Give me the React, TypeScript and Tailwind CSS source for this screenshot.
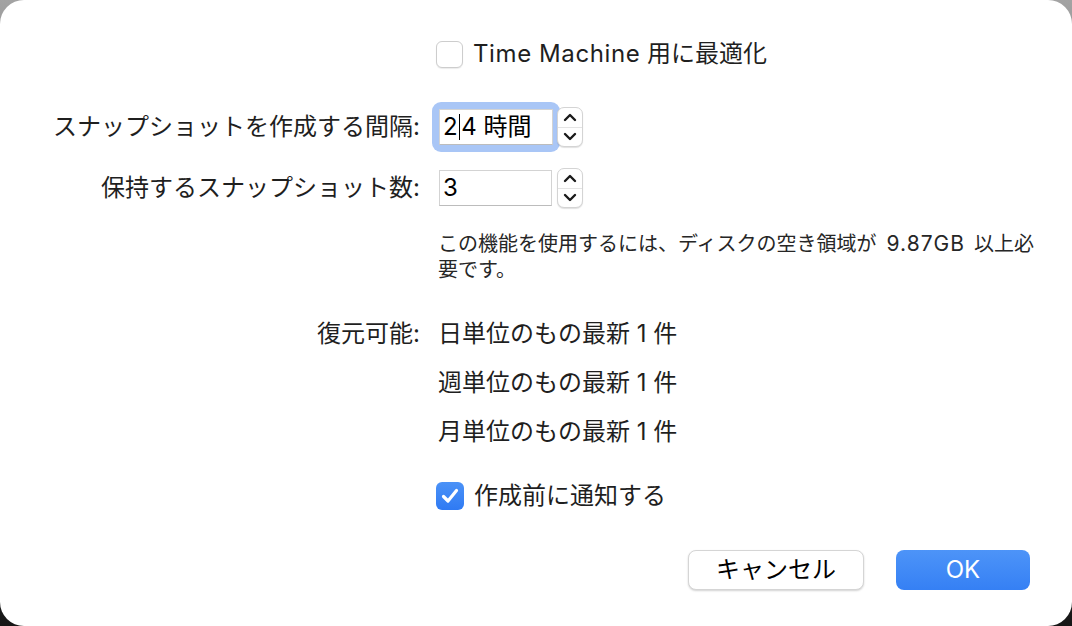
import React from "react";

function Stepper() {
  return (
    <div className="flex h-[40px] w-[26px] flex-col overflow-hidden rounded-[7px] border border-[#d4d4d4] bg-white shadow-[0_1px_1px_rgba(0,0,0,0.12)]">
      <div className="flex flex-1 items-center justify-center border-b border-[#e4e4e4] pt-[1px]">
        <svg width="14" height="9" viewBox="0 0 14 9">
          <path d="M2 7 L7 2 L12 7" fill="none" stroke="#1a1a1a" strokeWidth="2.4" strokeLinecap="round" strokeLinejoin="round" />
        </svg>
      </div>
      <div className="flex flex-1 items-center justify-center pb-[1px]">
        <svg width="14" height="9" viewBox="0 0 14 9">
          <path d="M2 2 L7 7 L12 2" fill="none" stroke="#1a1a1a" strokeWidth="2.4" strokeLinecap="round" strokeLinejoin="round" />
        </svg>
      </div>
    </div>
  );
}

export default function App() {
  return (
    <div className="h-[626px] w-[1072px] bg-linear-to-b from-[#a3a3a3] to-[#161616] font-['Inter','Noto_Sans_CJK_JP',sans-serif] text-[#1f1f1f]">
      <div className="flex h-full w-full flex-col rounded-[24px] bg-white pt-[40px]">
        {/* Time Machine checkbox */}
        <div className="flex h-[28px] items-center pl-[436px]">
          <div className="h-[27px] w-[27px] rounded-[6px] border border-[#cdcdcd] bg-white shadow-[0_1px_1px_rgba(0,0,0,0.08)]" />
          <span className="ml-[10px] text-[24px] leading-none">
            <span className="tracking-[0.6px]">Time Machine</span> 用に最適化
          </span>
        </div>

        {/* Row 1 */}
        <div className="mt-[34px] flex h-[50px] items-center">
          <div className="w-[420px] text-right text-[24px] leading-none">スナップショットを作成する間隔:</div>
          <div className="ml-[12px] rounded-[9px] bg-[#a9c6f6] p-[7px]">
            <div className="flex h-[36px] w-[114px] items-center border border-[#d3d3d3] border-b-[#bcbcbc] bg-white pl-[3px] text-[24px] leading-none text-black">
              <span>2</span>
              <span className="mx-[1px] h-[26px] w-[1.5px] bg-black" />
              <span>4 時間</span>
            </div>
          </div>
          <div className="ml-[-3px]">
            <Stepper />
          </div>
        </div>

        {/* Row 2 */}
        <div className="mt-[16px] flex h-[40px] items-center">
          <div className="w-[420px] text-right text-[24px] leading-none">保持するスナップショット数:</div>
          <div className="ml-[19px] flex h-[36px] w-[113px] items-center border border-[#d3d3d3] border-b-[#bcbcbc] bg-white pl-[3px] text-[24px] leading-none text-black">
            3
          </div>
          <div className="ml-[5px]">
            <Stepper />
          </div>
        </div>

        {/* Help text */}
        <div className="mt-[23px] whitespace-nowrap pl-[438px] text-[20px] leading-[26px] text-[#262626]">
          この機能を使用するには、ディスクの空き領域が
          <span className="ml-[10px] mr-[9px] text-[21px] tracking-[1px]">9.87GB</span>
          以上必
          <br />
          要です。
        </div>

        {/* Restore */}
        <div className="mt-[26px] flex text-[24px] leading-[49px]">
          <div className="w-[420px] text-right">復元可能:</div>
          <div className="ml-[18px] flex flex-col">
            <span>日単位のもの最新 1 件</span>
            <span>週単位のもの最新 1 件</span>
            <span>月単位のもの最新 1 件</span>
          </div>
        </div>

        {/* Notify checkbox */}
        <div className="mt-[26px] flex h-[28px] items-center pl-[436px]">
          <div className="flex h-[28px] w-[28px] items-center justify-center rounded-[6px] bg-linear-to-b from-[#4b92f7] to-[#2f7af3]">
            <svg width="20" height="18" viewBox="0 0 20 18">
              <path d="M3.5 9.5 L8 14 L16.5 3.5" fill="none" stroke="white" strokeWidth="3.2" strokeLinecap="round" strokeLinejoin="round" />
            </svg>
          </div>
          <span className="ml-[10px] text-[24px] leading-none">作成前に通知する</span>
        </div>

        {/* Buttons */}
        <div className="mt-[40px] flex justify-end gap-[32px] pr-[42px]">
          <button className="flex h-[40px] w-[176px] items-center justify-center rounded-[8px] border border-[#d5d5d5] bg-white text-[24px] leading-none text-black shadow-[0_1px_2px_rgba(0,0,0,0.18)]">
            キャンセル
          </button>
          <button className="flex h-[40px] w-[134px] items-center justify-center rounded-[8px] bg-linear-to-b from-[#4d94f8] to-[#3580f4] text-[24px] leading-none text-white">
            OK
          </button>
        </div>
      </div>
    </div>
  );
}
